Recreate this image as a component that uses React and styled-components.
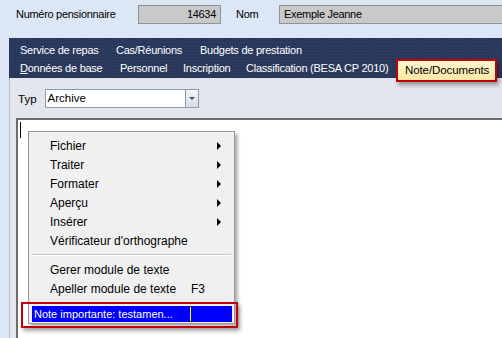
import React from 'react';
import styled, { createGlobalStyle } from 'styled-components';

const Global = createGlobalStyle`
  html, body { margin: 0; padding: 0; }
  body {
    width: 502px;
    height: 338px;
    overflow: hidden;
    background: #dbe7f5;
    font-family: "Liberation Sans", Arial, sans-serif;
    font-size: 12px;
    color: #000;
  }
`;

const Screen = styled.div`
  width: 502px;
  height: 338px;
  display: flex;
  flex-direction: column;
`;

const Header = styled.div`
  height: 38px;
  display: flex;
  align-items: flex-start;
  padding: 5px 0 0 16px;
  box-sizing: border-box;
  font-size: 11px;
  letter-spacing: -0.3px;
`;

const Label = styled.span`
  line-height: 19px;
  width: ${p => p.w}px;
  flex: none;
`;

const Field = styled.div`
  height: 19px;
  box-sizing: border-box;
  width: ${p => p.w}px;
  flex: none;
  background: #c9c9c9;
  border: 1px solid #8f9296;
  line-height: 17px;
  padding: 0 4px;
  text-align: ${p => (p.right ? 'right' : 'left')};
`;

const Body = styled.div`
  flex: 1;
  margin-left: 9px;
  display: flex;
  flex-direction: column;
  min-height: 0;
`;

const TabBand = styled.div`
  height: 40px;
  box-sizing: border-box;
  padding: 3px 0 0 11px;
  background-color: #29385a;
  background-image: radial-gradient(#34466b 0.6px, transparent 0.8px);
  background-size: 3px 3px;
  position: relative;
  z-index: 2;
  font-size: 11px;
  letter-spacing: -0.25px;
`;

const TabRow = styled.div`
  display: flex;
  align-items: center;
  height: 18px;
`;

const Tab = styled.span`
  color: #fff;
  white-space: nowrap;
  flex: none;
  width: ${p => (p.w ? `${p.w}px` : 'auto')};
  u { text-decoration: underline; }
`;

const ActiveTab = styled.span`
  margin-left: 7px;
  margin-top: 5px;
  height: 23px;
  box-sizing: border-box;
  padding: 0 6px 0 7px;
  line-height: 19px;
  font-size: 11.5px;
  letter-spacing: -0.1px;
  white-space: nowrap;
  background: linear-gradient(#fff6cf, #fbe8a6);
  border: 2px solid #c2000b;
  box-shadow: 2px 3px 4px rgba(0, 0, 0, 0.35);
`;

const Panel = styled.div`
  flex: 1;
  background: #e3e6ec;
  border-left: 1px solid #b7bcc6;
  display: flex;
  flex-direction: column;
  min-height: 0;
`;

const TypRow = styled.div`
  display: flex;
  align-items: center;
  gap: 8px;
  padding: 11px 0 10px 8px;
  font-size: 11.5px;
`;

const Select = styled.div`
  width: 154px;
  height: 19px;
  box-sizing: border-box;
  display: flex;
  background: #fff;
  border: 1px solid #8e9aae;
`;

const SelectText = styled.span`
  flex: 1;
  line-height: 17px;
  padding-left: 2px;
`;

const DropButton = styled.span`
  width: 12px;
  border-left: 1px solid #8e9aae;
  background: linear-gradient(#f3f5f8, #d7dde6);
  display: flex;
  align-items: center;
  justify-content: center;
  &::after {
    content: '';
    border-left: 3px solid transparent;
    border-right: 3px solid transparent;
    border-top: 3px solid #3c4f77;
  }
`;

const Editor = styled.div`
  flex: 1;
  margin-left: 6px;
  background: #fff;
  border-top: 2px solid #6e6e6e;
  border-left: 2px solid #6e6e6e;
  position: relative;
`;

const Caret = styled.span`
  position: absolute;
  left: 2px;
  top: 2px;
  width: 1px;
  height: 16px;
  background: #000;
`;

const Menu = styled.div`
  position: absolute;
  left: 10px;
  top: 11px;
  width: 207px;
  height: 193px;
  box-sizing: border-box;
  background: #f0f0f0;
  border: 1px solid #979797;
  box-shadow: 3px 3px 3px rgba(0, 0, 0, 0.3);
  padding: 4px 2px 0 2px;
`;

const Item = styled.div`
  height: 19px;
  display: flex;
  align-items: center;
  padding-left: 19px;
  padding-right: 11px;
`;

const ItemText = styled.span`
  flex: 1;
`;

const Arrow = styled.span`
  border-top: 4px solid transparent;
  border-bottom: 4px solid transparent;
  border-left: 4px solid #000;
`;

const Shortcut = styled.span`
  width: 30px;
`;

const Separator = styled.div`
  height: 1px;
  margin: 4px 1px;
  background: #c5c5c5;
  border-bottom: 1px solid #fff;
`;

const Highlight = styled.div`
  position: absolute;
  left: 3px;
  top: 182px;
  width: 217px;
  height: 26px;
  box-sizing: border-box;
  border: 2px solid #c2000b;
  box-shadow: 2px 3px 4px rgba(0, 0, 0, 0.35);
  padding: 2px 4px 0 9px;
`;

const Selected = styled.div`
  height: 16px;
  background: #0000ff;
  color: #fff;
  line-height: 16px;
  padding-left: 2px;
  font-size: 11px;
  position: relative;
`;

const Beam = styled.span`
  position: absolute;
  left: 158px;
  top: 0;
  width: 1px;
  height: 16px;
  background: #ffff00;
  &::before, &::after {
    content: '';
    position: absolute;
    left: -2px;
    width: 5px;
    height: 1px;
    background: #222;
  }
  &::before { top: 0; }
  &::after { bottom: 0; }
`;

const tabsTop = [
  { label: 'Service de repas', w: 96 },
  { label: 'Cas/Réunions', w: 84 },
  { label: 'Budgets de prestation' },
];
const tabsBottom = [
  { label: 'Personnel', w: 63 },
  { label: 'Inscription', w: 63 },
  { label: 'Classification (BESA CP 2010)', w: 143 },
];
const subMenus = ['Fichier', 'Traiter', 'Formater', 'Aperçu', 'Insérer'];

export default function App() {
  return (
    <Screen>
      <Global />
      <Header>
        <Label w={122}>Numéro pensionnaire</Label>
        <Field w={83} right>14634</Field>
        <Label w={15} />
        <Label w={43}>Nom</Label>
        <Field w={230}>Exemple Jeanne</Field>
      </Header>
      <Body>
        <TabBand>
          <TabRow>
            {tabsTop.map(t => <Tab key={t.label} w={t.w}>{t.label}</Tab>)}
          </TabRow>
          <TabRow>
            <Tab w={100}><u>D</u>onnées de base</Tab>
            {tabsBottom.map(t => <Tab key={t.label} w={t.w}>{t.label}</Tab>)}
            <ActiveTab>Note/Documents</ActiveTab>
          </TabRow>
        </TabBand>
        <Panel>
          <TypRow>
            <span>Typ</span>
            <Select>
              <SelectText>Archive</SelectText>
              <DropButton />
            </Select>
          </TypRow>
          <Editor>
            <Caret />
            <Menu>
              {subMenus.map(m => (
                <Item key={m}><ItemText>{m}</ItemText><Arrow /></Item>
              ))}
              <Item><ItemText>Vérificateur d'orthographe</ItemText></Item>
              <Separator />
              <Item><ItemText>Gerer module de texte</ItemText></Item>
              <Item><ItemText>Apeller module de texte</ItemText><Shortcut>F3</Shortcut></Item>
            </Menu>
            <Highlight>
              <Selected>
                Note importante: testamen...
                <Beam />
              </Selected>
            </Highlight>
          </Editor>
        </Panel>
      </Body>
    </Screen>
  );
}
